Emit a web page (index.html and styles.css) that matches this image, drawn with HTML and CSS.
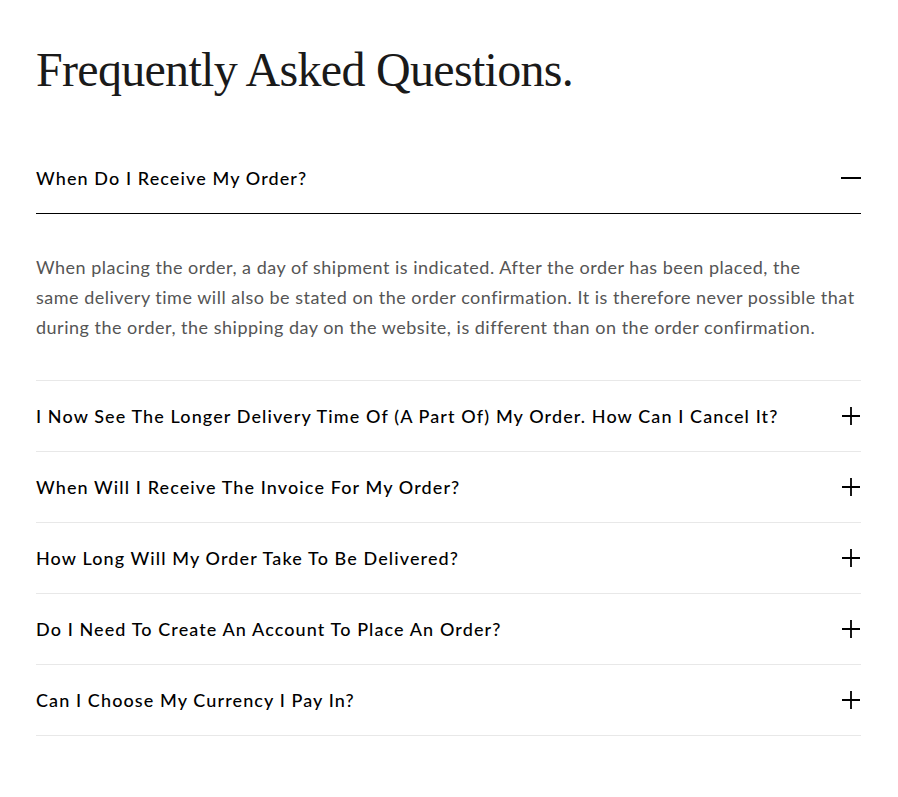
FILE: index.html
```html
<!DOCTYPE html>
<html lang="en">
<head>
<meta charset="utf-8">
<title>FAQ</title>
<link rel="stylesheet" href="styles.css">
</head>
<body>
<main class="faq">
  <h1 class="faq-title">Frequently Asked Questions.</h1>
  <div class="faq-list">
    <div class="faq-item is-open">
      <div class="faq-q">
        <span class="faq-q-text">When Do I Receive My Order?</span>
        <span class="faq-icon"><svg width="20" height="20" viewBox="0 0 20 20"><path d="M0 10H20" stroke="#000" stroke-width="2"/></svg></span>
      </div>
      <p class="faq-a">When placing the order, a day of shipment is indicated. After the order has been placed, the<br>same delivery time will also be stated on the order confirmation. It is therefore never possible that<br>during the order, the shipping day on the website, is different than on the order confirmation.</p>
    </div>
    <div class="faq-item">
      <div class="faq-q">
        <span class="faq-q-text">I Now See The Longer Delivery Time Of (A Part Of) My Order. How Can I Cancel It?</span>
        <span class="faq-icon"><svg width="20" height="20" viewBox="0 0 20 20"><path d="M1 10H19M10 1V19" stroke="#000" stroke-width="1.8"/></svg></span>
      </div>
    </div>
    <div class="faq-item">
      <div class="faq-q">
        <span class="faq-q-text">When Will I Receive The Invoice For My Order?</span>
        <span class="faq-icon"><svg width="20" height="20" viewBox="0 0 20 20"><path d="M1 10H19M10 1V19" stroke="#000" stroke-width="1.8"/></svg></span>
      </div>
    </div>
    <div class="faq-item">
      <div class="faq-q">
        <span class="faq-q-text">How Long Will My Order Take To Be Delivered?</span>
        <span class="faq-icon"><svg width="20" height="20" viewBox="0 0 20 20"><path d="M1 10H19M10 1V19" stroke="#000" stroke-width="1.8"/></svg></span>
      </div>
    </div>
    <div class="faq-item">
      <div class="faq-q">
        <span class="faq-q-text">Do I Need To Create An Account To Place An Order?</span>
        <span class="faq-icon"><svg width="20" height="20" viewBox="0 0 20 20"><path d="M1 10H19M10 1V19" stroke="#000" stroke-width="1.8"/></svg></span>
      </div>
    </div>
    <div class="faq-item">
      <div class="faq-q">
        <span class="faq-q-text">Can I Choose My Currency I Pay In?</span>
        <span class="faq-icon"><svg width="20" height="20" viewBox="0 0 20 20"><path d="M1 10H19M10 1V19" stroke="#000" stroke-width="1.8"/></svg></span>
      </div>
    </div>
  </div>
</main>
</body>
</html>
```
FILE: styles.css
```css
* { box-sizing: border-box; }
body {
  margin: 0;
  background: #fff;
  color: #000;
  font-family: "Lato", "Open Sans", sans-serif;
}
.faq {
  padding: 0 37px 0 36px;
}
.faq-title {
  margin: 0;
  padding-top: 40px;
  font-family: "Liberation Serif", serif;
  font-weight: 400;
  font-size: 48px;
  line-height: 60px;
  letter-spacing: -0.7px;
  color: #1a1a1a;
}
.faq-list {
  margin-top: 43px;
  display: flex;
  flex-direction: column;
}
.faq-item {
  border-bottom: 1px solid #e8e8e8;
}
.faq-q {
  display: flex;
  align-items: center;
  justify-content: space-between;
  height: 70px;
}
.faq-item.is-open .faq-q {
  border-bottom: 1px solid #000;
  height: 71px;
}
.faq-q-text {
  font-size: 18px;
  font-weight: 500;
  letter-spacing: 1.1px;
  color: #000;
}
.faq-icon {
  display: flex;
  width: 20px;
  height: 20px;
}
.faq-a {
  margin: 0;
  padding: 38px 0 38px;
  font-size: 18px;
  line-height: 30px;
  letter-spacing: 0.5px;
  white-space: nowrap;
  color: #555;
}
```
